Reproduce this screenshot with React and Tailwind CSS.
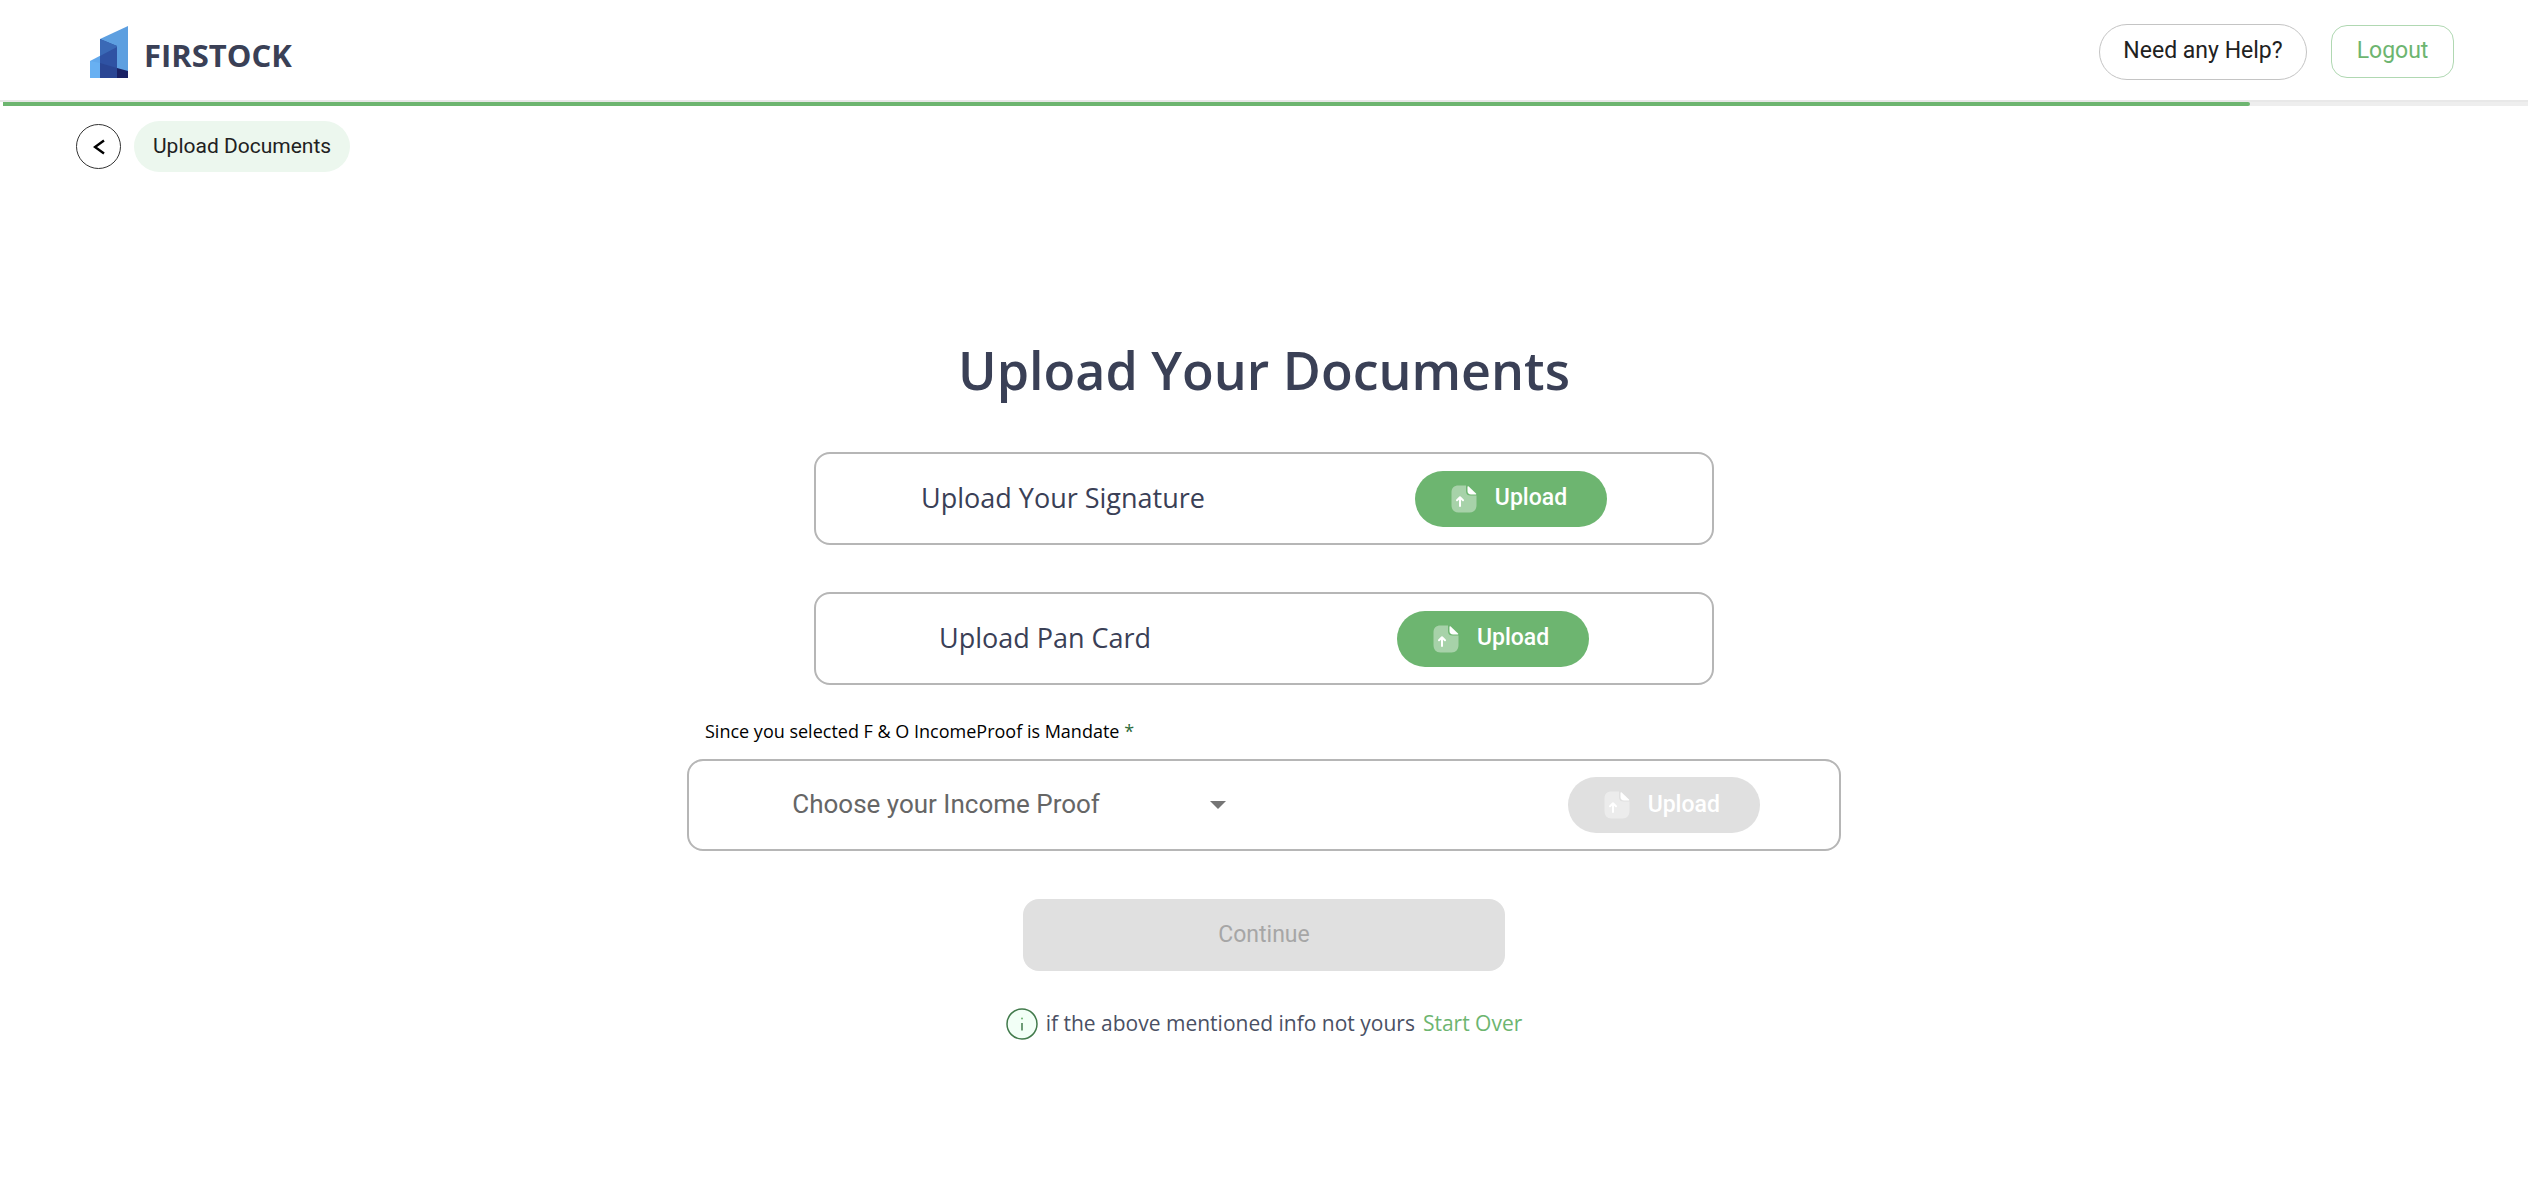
import { useState } from "react";

const PROGRESS = 89;

const INCOME_PROOFS = [
  "Bank Statement",
  "Salary Slip",
  "ITR Acknowledgement",
  "Form 16",
  "Demat Holding Statement",
];

const Logo = () => (
  <svg viewBox="0 0 38 52" className="h-[52px] w-[38px]" aria-hidden="true">
    <path d="M10 13 L38 0 V52 H10 Z" fill="#5d9fe0" />
    <path d="M0 35 L27 21 V52 H0 Z" fill="#62a8ec" />
    <path d="M10 13 L27 20 V52 H10 Z" fill="#2f52a3" />
    <path d="M10 13 L27 20 V21 L10 30 Z" fill="#3a69b6" />
    <path d="M27 42 L38 45 V52 H27 Z" fill="#1a2164" />
    <path d="M10 37 L27 42 V52 H10 Z" fill="#2a4694" />
    <path d="M0 35 L10 37 V52 H0 Z" fill="#68b0f2" />
  </svg>
);

const UploadIcon = () => (
  <svg viewBox="0 0 26 28" className="h-7 w-[26px]" aria-hidden="true">
    <path
      d="M15 0.5 H7.5 C3 0.5 0.5 3 0.5 7.5 V20 C0.5 24.5 3 27.5 7.5 27.5 H18.5 C23 27.5 25.5 24.5 25.5 20 V10.5 H19.5 C16.5 10.5 15 9 15 6 Z"
      fill="white"
      fillOpacity="0.4"
    />
    <path
      d="M16.5 1.8 C16.5 1.2 17.2 1 17.7 1.4 L25 8.5 C25.5 9 25.2 9.5 24.6 9.5 H20 C17.7 9.5 16.5 8.3 16.5 6 Z"
      fill="white"
    />
    <path
      d="M9 21 V12.5 M6 15.2 L9 12.2 L12 15.2"
      fill="none"
      stroke="white"
      strokeWidth="2"
      strokeLinecap="round"
      strokeLinejoin="round"
    />
  </svg>
);

const InfoIcon = () => (
  <svg viewBox="0 0 32 32" className="h-8 w-8" aria-hidden="true">
    <circle cx="16" cy="16" r="15" fill="#f2fff6" stroke="#417a4b" strokeWidth="1.5" />
    <circle cx="16" cy="10.5" r="1" fill="#6db570" />
    <path d="M16 15 V22.5" stroke="#417a4b" strokeWidth="1.5" />
  </svg>
);

const UploadButton = ({ label, disabled }) => (
  <button
    type="button"
    aria-label={label}
    disabled={disabled}
    className="flex h-14 w-48 items-center justify-center gap-[18px] rounded-full bg-[#6db570] pr-1 font-['Roboto',sans-serif] text-[23px] font-medium text-white disabled:bg-[#e0e0e0]"
  >
    <UploadIcon />
    Upload
  </button>
);

const UploadRow = ({ title }) => (
  <div className="flex h-[93px] w-full max-w-[900px] items-center justify-around rounded-2xl border-2 border-[#b6b6b6]">
    <p className="text-[27px] text-[#3a4056]">{title}</p>
    <UploadButton label={title} />
  </div>
);

const App = () => {
  const [incomeProof, setIncomeProof] = useState("");

  return (
    <div className="min-h-screen bg-white font-['Open_Sans',sans-serif]">
      <header className="flex h-[102px] items-center justify-between border-b-2 border-[#e8e8e8] pt-[3px] pr-[74px] pl-[90px]">
        <div className="flex items-center gap-4">
          <Logo />
          <span className="pt-2 text-[31px] font-bold text-[#3a4056]">FIRSTOCK</span>
        </div>
        <div className="flex items-center gap-6 font-['Roboto',sans-serif] text-[23px]">
          <button
            type="button"
            className="h-14 w-[208px] rounded-full border border-[#c4c4c4] text-[#212121]"
          >
            Need any Help?
          </button>
          <button
            type="button"
            className="h-[53px] w-[123px] rounded-2xl border border-[#b0d8b2] text-[#6db570]"
          >
            Logout
          </button>
        </div>
      </header>

      <div
        role="progressbar"
        aria-label="Progress"
        aria-valuenow={PROGRESS}
        aria-valuemin={0}
        aria-valuemax={100}
        className="ml-[3px] h-1 bg-[#eeeeee]"
      >
        <div className="h-full rounded-r-sm bg-[#6db570]" style={{ width: `${PROGRESS}%` }} />
      </div>

      <nav className="flex items-center gap-[13px] pt-[15px] pl-[76px]">
        <button
          type="button"
          aria-label="Back"
          className="flex h-[45px] w-[45px] items-center justify-center rounded-full border border-[#333333]"
        >
          <svg viewBox="0 0 12 16" className="h-4 w-3" aria-hidden="true">
            <path d="M11 1.5 L2 8 L11 14.5" fill="none" stroke="black" strokeWidth="2.4" />
          </svg>
        </button>
        <span className="flex h-[51px] items-center rounded-full bg-[#ecf7ee] px-[19px] font-['Roboto',sans-serif] text-[21px] text-[#212121]">
          Upload Documents
        </span>
      </nav>

      <main className="flex flex-col items-center px-6 pt-40 pb-16">
        <h1 className="mb-11 text-[52px] leading-[76px] font-semibold text-[#3a4056]">
          Upload Your Documents
        </h1>

        <div className="flex w-full flex-col items-center gap-[47px]">
          <UploadRow title="Upload Your Signature" />
          <UploadRow title="Upload Pan Card" />
        </div>

        <div className="mt-8 w-full max-w-[1154px]">
          <label htmlFor="incomeProof" className="block pl-[18px] text-[18px] leading-7 text-black">
            Since you selected F &amp; O IncomeProof is Mandate{" "}
            <span className="text-[#2e6b3a]">*</span>
          </label>
          <div className="mt-[14px] flex h-[92px] items-center justify-around rounded-2xl border-2 border-[#b6b6b6]">
            <div className="w-[641px] pl-6">
              <div className="relative w-[440px]">
                <select
                  id="incomeProof"
                  value={incomeProof}
                  onChange={(e) => setIncomeProof(e.target.value)}
                  className="h-12 w-full appearance-none bg-transparent pb-0.5 font-['Roboto',sans-serif] text-[26px] text-[#666666] outline-none"
                >
                  <option value="">Choose your Income Proof</option>
                  {INCOME_PROOFS.map((proof) => (
                    <option key={proof} value={proof}>
                      {proof}
                    </option>
                  ))}
                </select>
                <svg
                  viewBox="0 0 16 8"
                  className="pointer-events-none absolute top-5 right-1.5 h-2 w-4"
                  aria-hidden="true"
                >
                  <path d="M0 0 H16 L8 8 Z" fill="#757575" />
                </svg>
              </div>
            </div>
            <UploadButton label="Upload income proof" disabled={!incomeProof} />
          </div>
        </div>

        <button
          type="button"
          disabled
          className="mt-12 h-[72px] w-full max-w-[482px] rounded-2xl bg-[#e0e0e0] font-['Roboto',sans-serif] text-[23px] text-[#a6a6a6]"
        >
          Continue
        </button>

        <div className="mt-[37px] flex items-center gap-2 text-[21px] text-[#4a5064]">
          <InfoIcon />
          <p>if the above mentioned info not yours</p>
          <a href="#start-over" className="text-[#6db570]">
            Start Over
          </a>
        </div>
      </main>
    </div>
  );
};

export default App;
